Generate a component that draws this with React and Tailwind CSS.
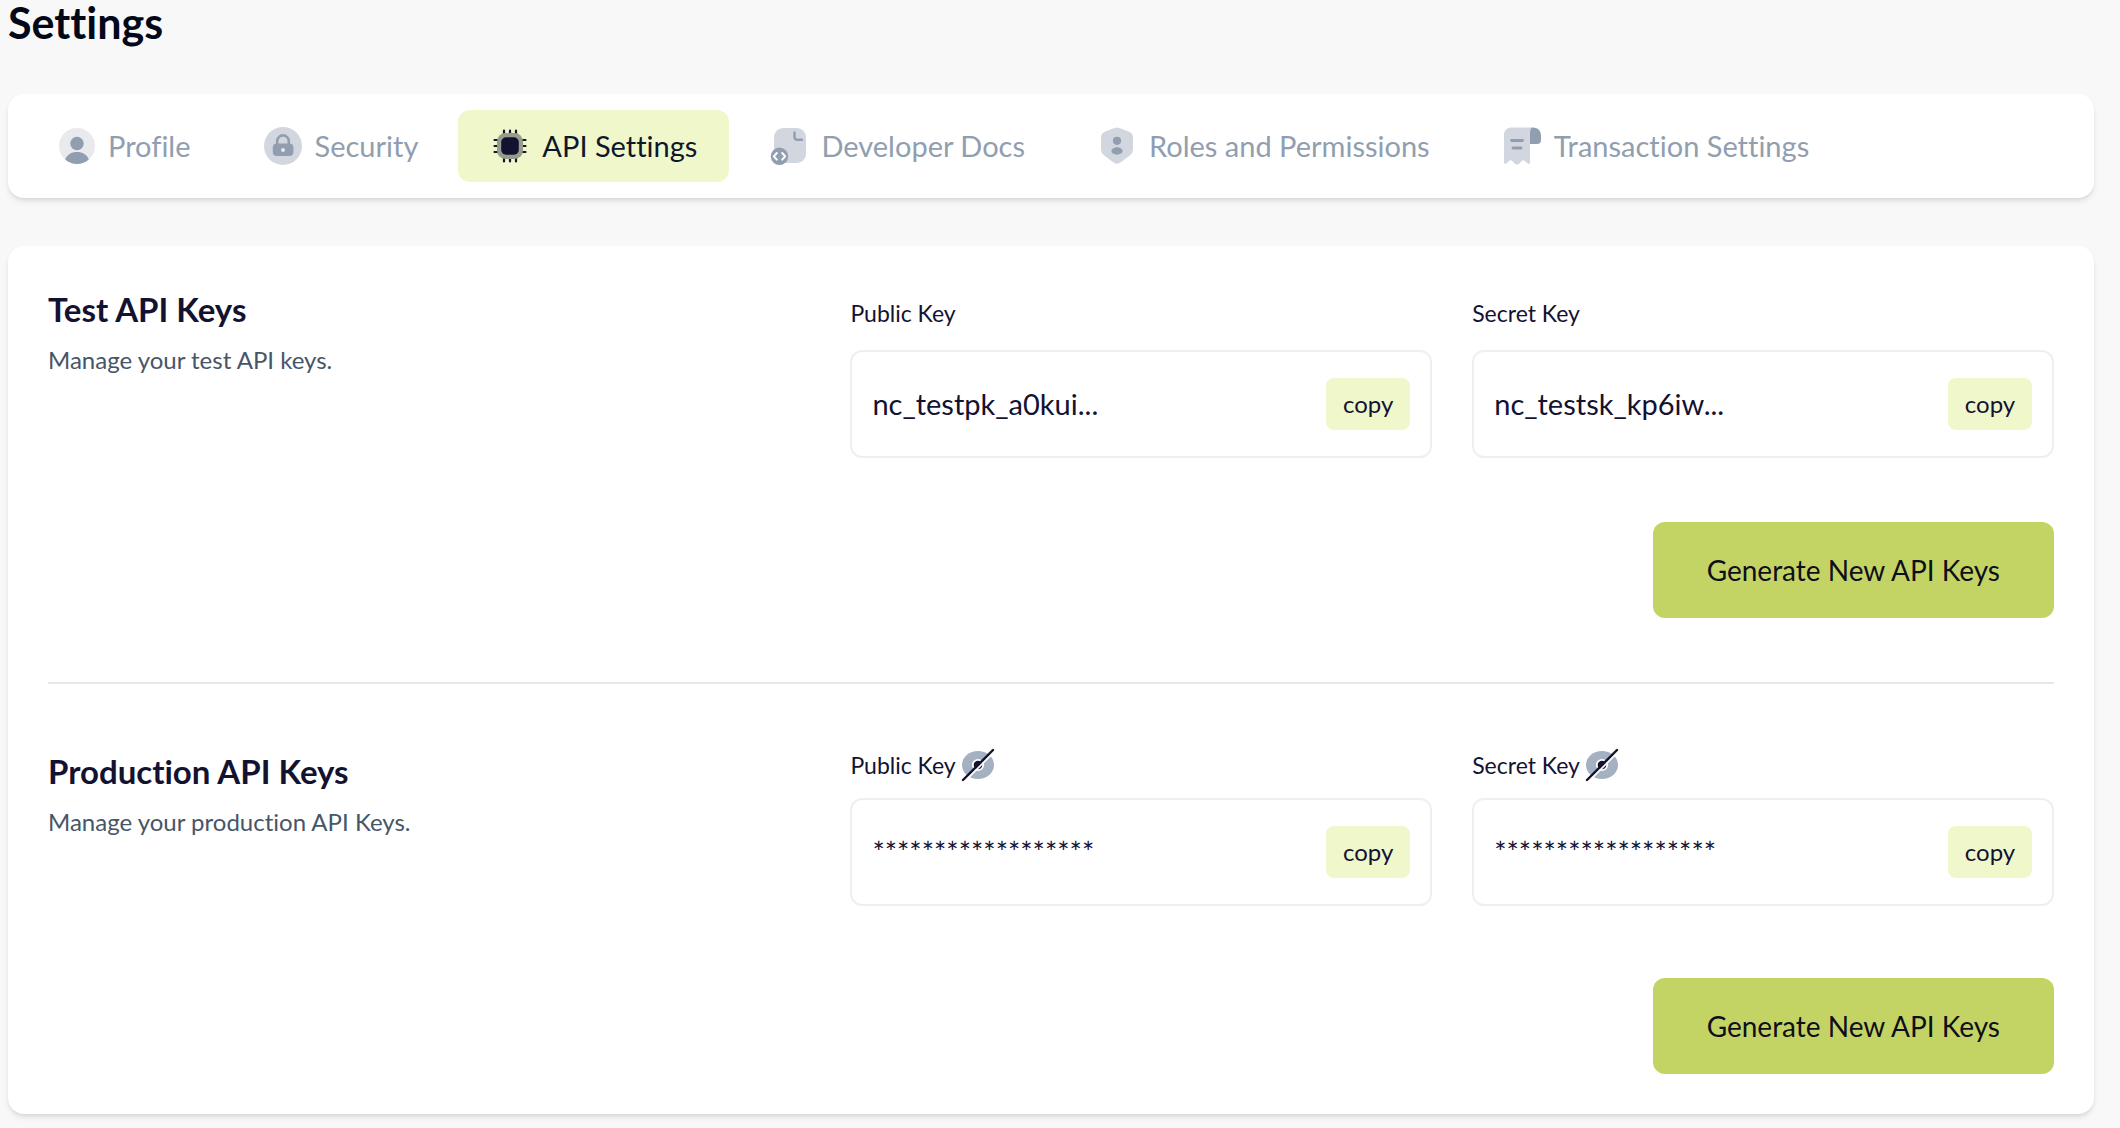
import React, { useState } from 'react';

const ProfileIcon = () => (
  <svg viewBox="0 0 40 40" className="size-10 shrink-0" aria-hidden="true">
    <circle cx="21" cy="20" r="18" fill="#e8eaee" />
    <circle cx="21" cy="17.5" r="6.7" fill="#909eb0" />
    <path d="M9.2 33.6c1.8-5 6-7.6 11.8-7.6s10 2.6 11.8 7.6A18 18 0 0 1 21 38a18 18 0 0 1-11.8-4.4Z" fill="#909eb0" />
  </svg>
);

const SecurityIcon = () => (
  <svg viewBox="0 0 40 40" className="size-10 shrink-0" aria-hidden="true">
    <circle cx="20" cy="20" r="19" fill="#d2d7df" />
    <path d="M14.2 19v-3.8a5.8 5.8 0 0 1 11.6 0V19" fill="none" stroke="#909eb0" strokeWidth="2.6" />
    <rect x="9.8" y="17.6" width="20.6" height="12.4" rx="4" fill="#909eb0" />
    <circle cx="20" cy="24" r="2" fill="#e4e8ed" />
  </svg>
);

const ApiIcon = () => (
  <svg viewBox="0 0 40 40" className="size-10 shrink-0" aria-hidden="true">
    <path
      d="M14 8V4.5M20 8V4.5M26 8V4.5M14 35.5V32M20 35.5V32M26 35.5V32M8 14H4.5M8 20H4.5M8 26H4.5M35.5 14H32M35.5 20H32M35.5 26H32"
      stroke="#131231"
      strokeWidth="2.2"
      strokeLinecap="round"
    />
    <rect x="7" y="7" width="26" height="26" rx="8.5" fill="#979d8d" />
    <rect x="11.2" y="11.2" width="17.6" height="17.6" rx="5" fill="#131231" />
  </svg>
);

const DocsIcon = () => (
  <svg viewBox="0 0 40 40" className="size-10 shrink-0" aria-hidden="true">
    <rect x="5" y="2" width="32" height="35" rx="9" fill="#d2d7df" />
    <path d="M25.5 6.5V11c0 1.8 1 2.8 2.8 2.8H33" fill="none" stroke="#909eb0" strokeWidth="2.4" strokeLinecap="round" />
    <circle cx="10.5" cy="30.3" r="8.7" fill="#909eb0" />
    <path
      d="M7.8 27 4.8 30.3 7.8 33.6M13.2 27 16.2 30.3 13.2 33.6"
      fill="none"
      stroke="#fff"
      strokeWidth="2"
      strokeLinecap="round"
      strokeLinejoin="round"
    />
  </svg>
);

const RolesIcon = () => (
  <svg viewBox="0 0 40 40" className="size-10 shrink-0" aria-hidden="true">
    <path
      d="M17.6 1.9a7 7 0 0 1 4.8 0l9.4 3.5A6.5 6.5 0 0 1 36 11.4v12.2a7 7 0 0 1-2.9 5.7l-8.9 6.8a7 7 0 0 1-8.4 0l-8.9-6.8A7 7 0 0 1 4 23.6V11.4a6.5 6.5 0 0 1 4.2-6Z"
      fill="#d2d7df"
    />
    <circle cx="20" cy="14.8" r="4.1" fill="#909eb0" />
    <ellipse cx="20" cy="25" rx="5.6" ry="3.7" fill="#909eb0" />
  </svg>
);

const TransactionIcon = () => (
  <svg viewBox="0 0 40 40" className="size-10 shrink-0" aria-hidden="true">
    <path
      d="M31 1.5H9a7 7 0 0 0-7 7v28c0 1.5 1.5 1.8 2.5.8l3.2-2.7a1.5 1.5 0 0 1 2 0l3.6 3.4c1 1 2.4 1 3.4 0l3.6-3.4a1.5 1.5 0 0 1 2 0l3.2 2.7c1 1 2.5.7 2.5-.8V9c0-4 1-6.5 3-7.5Z"
      fill="#d2d7df"
    />
    <path d="M28 18V7c0-3.5 1-5.5 3-5.5 5 0 8 3.5 8 8.5v4c0 2.8-1.4 4-4 4Z" fill="#909eb0" />
    <path d="M9.5 14.5h11M11 22h8" stroke="#909eb0" strokeWidth="2.8" strokeLinecap="round" />
  </svg>
);

const EyeSlashIcon = () => (
  <svg viewBox="0 0 36 36" className="size-9" aria-hidden="true">
    <ellipse cx="18" cy="18" rx="16" ry="14" fill="#a3b1c2" />
    <circle cx="18" cy="18" r="5.2" fill="#131231" stroke="#fff" strokeWidth="1.8" />
    <path d="M4.5 34.5 35.5 3.5" stroke="#fff" strokeWidth="1.8" />
    <path d="M3 33 33 3" stroke="#131231" strokeWidth="2.4" strokeLinecap="round" />
  </svg>
);

const tabs = [
  { label: 'Profile', icon: ProfileIcon },
  { label: 'Security', icon: SecurityIcon },
  { label: 'API Settings', icon: ApiIcon },
  { label: 'Developer Docs', icon: DocsIcon },
  { label: 'Roles and Permissions', icon: RolesIcon },
  { label: 'Transaction Settings', icon: TransactionIcon },
];

const MASK = '******************';

function KeyField({ id, label, value, secured }) {
  const [hidden, setHidden] = useState(secured);

  return (
    <div className={secured ? 'flex-1 space-y-4' : 'flex-1 space-y-2.5'}>
      <div className={secured ? 'flex h-[34px] items-center gap-1' : 'flex h-[54px] items-center gap-1'}>
        <label htmlFor={id} className="text-[23px]">
          {label}
        </label>
        {secured && (
          <button type="button" aria-label={`Toggle ${label}`} onClick={() => setHidden(!hidden)}>
            <EyeSlashIcon />
          </button>
        )}
      </div>
      <div className="flex h-[108px] items-center gap-4 rounded-xl border-2 border-[#efefef] px-5">
        <input
          id={id}
          readOnly
          value={hidden ? MASK : value}
          className="min-w-0 flex-1 bg-transparent text-[29px] outline-none"
        />
        <button
          type="button"
          className="h-[52px] w-[84px] rounded-lg bg-[#f0f8cb] text-2xl"
          onClick={() => navigator.clipboard?.writeText(value)}
        >
          copy
        </button>
      </div>
    </div>
  );
}

function KeysSection({ title, description, fields, secured = false }) {
  return (
    <section className="flex">
      <div className="w-2/5">
        <h2 className="text-[33px] leading-[46px] font-bold">{title}</h2>
        <p className="mt-2.5 text-2xl leading-9 text-[#475569]">{description}</p>
      </div>
      <div className={secured ? 'flex flex-1 flex-col gap-[72px]' : 'flex flex-1 flex-col gap-16'}>
        <div className="flex gap-10">
          {fields.map((field) => (
            <KeyField key={field.id} secured={secured} {...field} />
          ))}
        </div>
        <button type="button" className="h-24 self-end rounded-xl bg-[#c4d464] px-[54px] text-[28px] text-[#0f0f1a]">
          Generate New API Keys
        </button>
      </div>
    </section>
  );
}

export default function App() {
  const [active, setActive] = useState('API Settings');

  return (
    <div className="min-h-screen bg-[#f8f8f8] pr-[26px] pb-3.5 pl-2 font-[Lato,sans-serif] text-[#131231] [font-variant-ligatures:none]">
      <h1 className="text-[43px] leading-[46px] font-bold text-[#020817]">Settings</h1>

      <nav className="mt-12 flex gap-2 rounded-2xl bg-white p-4 shadow-md">
        {tabs.map(({ label, icon: Icon }) => (
          <button
            key={label}
            type="button"
            onClick={() => setActive(label)}
            className={`flex h-[72px] items-center gap-3 rounded-xl px-8 text-[29px] whitespace-nowrap ${
              active === label ? 'bg-[#f0f8cb] text-[#0f172a]' : 'text-[#909eb0]'
            }`}
          >
            <Icon />
            {label}
          </button>
        ))}
      </nav>

      <main className="mt-12 rounded-2xl bg-white p-10 shadow-md">
        <KeysSection
          title="Test API Keys"
          description="Manage your test API keys."
          fields={[
            { id: 'test-public', label: 'Public Key', value: 'nc_testpk_a0kui...' },
            { id: 'test-secret', label: 'Secret Key', value: 'nc_testsk_kp6iw...' },
          ]}
        />
        <hr className="my-16 border-t-2 border-[#e5e7eb]" />
        <KeysSection
          secured
          title="Production API Keys"
          description="Manage your production API Keys."
          fields={[
            { id: 'prod-public', label: 'Public Key', value: '' },
            { id: 'prod-secret', label: 'Secret Key', value: '' },
          ]}
        />
      </main>
    </div>
  );
}
